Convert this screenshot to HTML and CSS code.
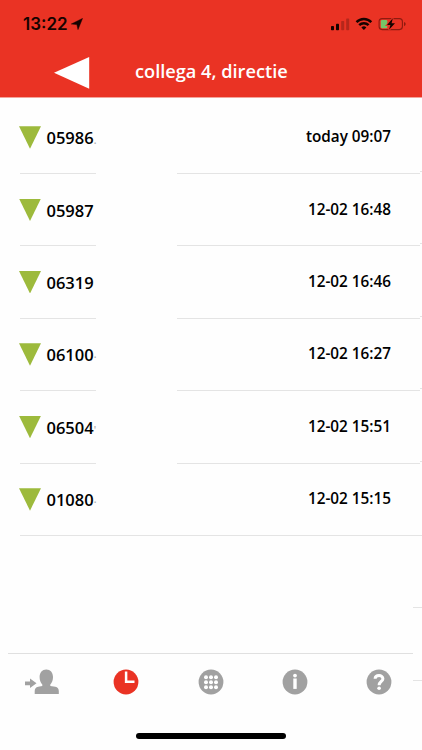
FILE: index.html
```html
<!DOCTYPE html>
<html lang="nl">
<head>
    <meta charset="UTF-8">
    <meta name="viewport" content="width=device-width, initial-scale=1.0">
    <title>collega 4, directie</title>
    <link rel="stylesheet" href="styles.css">
</head>
<body>
    <header class="header">
        <div class="status">
            <span class="clock">13:22</span>
            <svg class="location" width="12" height="12" viewBox="0 0 12 12"><path d="M11.5 .4 7 11.6 5.900 6.600 .3 6Z" stroke="#160300" stroke-width=".5"/></svg>
            <svg class="system" width="76" height="14" viewBox="0 0 76 14">
                <rect x="1" y="9" width="3" height="4.2" rx=".7"/>
                <rect x="6" y="6.7" width="3" height="6.5" rx=".7"/>
                <rect x="11.2" y="4" width="3" height="9.2" rx=".7" opacity=".25"/>
                <rect x="16.2" y="1.4" width="3" height="11.8" rx=".7" opacity=".25"/>
                <g fill="none" stroke="#160300" stroke-width="2.4">
                    <path d="M26.5 5.1a10.3 10.3 0 0 1 14.8 0M29.2 8.2a6.6 6.6 0 0 1 9.4 0"/>
                </g>
                <path d="M31.4 10.4a3.7 3.7 0 0 1 5 0L33.9 13Z"/>
                <rect x="49.1" y="1.6" width="23.3" height="11" rx="3" fill="none" stroke="#8d1b10" stroke-width="1.1"/>
                <path d="M74 5v4.2q1.7-.5 1.7-2.1T74 5" fill="#8d1b10"/>
                <rect x="50.8" y="3" width="6.5" height="8.3" rx="1.3" fill="#76c467"/>
                <path d="M62.8 1.2 57 8h3.4l-1.4 4.8 6-6.6h-3.4Z" stroke="#ea3324" stroke-width="1.8" paint-order="stroke"/>
            </svg>
        </div>
        <div class="title-bar">
            <svg class="back" width="36" height="32" viewBox="0 0 36 32"><path d="M0 15.8 35.2 0v31.7Z"/></svg>
            <h1>collega 4, directie</h1>
        </div>
    </header>

    <main class="calls">
        <div class="call">
            <span class="arrow"></span>
            <span class="number">05986<i>.</i></span>
            <span class="time">today 09:07</span>
        </div>
        <div class="call">
            <span class="arrow"></span>
            <span class="number">05987</span>
            <span class="time">12-02 16:48</span>
        </div>
        <div class="call">
            <span class="arrow"></span>
            <span class="number">06319</span>
            <span class="time">12-02 16:46</span>
        </div>
        <div class="call">
            <span class="arrow"></span>
            <span class="number">06100<i>·</i></span>
            <span class="time">12-02 16:27</span>
        </div>
        <div class="call">
            <span class="arrow"></span>
            <span class="number">06504<i>'</i></span>
            <span class="time">12-02 15:51</span>
        </div>
        <div class="call last">
            <span class="arrow"></span>
            <span class="number">01080<i>·</i></span>
            <span class="time">12-02 15:15</span>
        </div>
        <div class="call empty"></div>
        <div class="call empty"></div>
    </main>

    <footer class="footer">
        <nav class="tabs">
            <svg class="contact" width="34" height="26" viewBox="0 0 34 26">
                <path d="M0 12.4h5V9.6l6.500 4.700L5 19V16.2H0Z"/>
                <path d="M21.3.5c4.1 0 6.7 3 6.7 7.6 0 3-1 5.600-2.700 7.400v1.600l5 .7c2.400.5 3.500 2 3.500 4.200V25H9.700v-3c0-2.200 1.100-3.700 3.500-4.200l4.100-.7v-1.600c-1.700-1.800-2.700-4.400-2.700-7.400C14.600 3.500 17.200.5 21.300.5Z"/>
            </svg>
            <svg class="active" width="26" height="26" viewBox="0 0 26 26">
                <circle cx="13" cy="13" r="12.4"/>
                <path class="hands" d="M13.1 2.5V12.7H21.5"/>
            </svg>
            <svg width="26" height="26" viewBox="0 0 26 26">
                <circle cx="13" cy="13" r="12.4"/>
                <g class="mark">
                    <circle cx="8" cy="8.2" r="2"/><circle cx="13" cy="8.2" r="2"/><circle cx="18" cy="8.2" r="2"/>
                    <circle cx="8" cy="13.2" r="2"/><circle cx="13" cy="13.2" r="2"/><circle cx="18" cy="13.2" r="2"/>
                    <circle cx="8" cy="18.2" r="2"/><circle cx="13" cy="18.2" r="2"/><circle cx="18" cy="18.2" r="2"/>
                </g>
            </svg>
            <svg width="26" height="26" viewBox="0 0 26 26">
                <circle cx="13" cy="13" r="12.4"/>
                <g class="mark">
                    <circle cx="13" cy="6.6" r="1.9"/>
                    <rect x="11.3" y="9.5" width="3.4" height="10.4"/>
                </g>
            </svg>
            <svg width="26" height="26" viewBox="0 0 26 26">
                <circle cx="13" cy="13" r="12.4"/>
                <path class="line" d="M9.1 9.7C9.3 5.5 16.9 5.5 16.9 9.7 16.9 12.4 13.1 12.7 13.1 16.3"/>
                <circle class="mark" cx="13.1" cy="19.3" r="1.8"/>
            </svg>
        </nav>
        <div class="home-bar"></div>
    </footer>
</body>
</html>
```

FILE: styles.css
```css
* {
    box-sizing: border-box;
}
body {
    margin: 0;
    height: 750px;
    display: flex;
    flex-direction: column;
    overflow: hidden;
    background: #fefefe;
    color: #000;
    font-family: "Open Sans", "Noto Sans", sans-serif;
    font-weight: 600;
}
.header {
    height: 98px;
    flex: none;
    background: #ea3324;
    border-bottom: 1px solid #f3a49b;
}
.status {
    display: flex;
    align-items: center;
    height: 48px;
    padding: 0 16px 0 23px;
    fill: #160300;
}
.clock {
    color: #160300;
    font-family: Inter, sans-serif;
    font-size: 17px;
    line-height: 20px;
}
.location {
    margin-left: 3px;
}
.system {
    margin-left: auto;
}
.title-bar {
    display: flex;
    align-items: center;
    height: 49px;
    padding-left: 54px;
}
.back {
    fill: #fff;
}
h1 {
    margin: 0 0 4px 45px;
    color: #fff;
    font-size: 18.2px;
    font-weight: 600;
    line-height: 24px;
}
.calls {
    height: 555px;
    flex: none;
    padding-top: 3.6px;
}
.call {
    display: flex;
    align-items: flex-start;
    height: 72.4px;
    padding: 24.6px 31px 0 19px;
    /* the separator is broken behind the number */
    background:
        linear-gradient(#e4e4e4, #e4e4e4) 20px 100% / 76px 1px no-repeat,
        linear-gradient(#e4e4e4, #e4e4e4) 177px 100% / 243px 1px no-repeat,
        linear-gradient(#e4e4e4, #e4e4e4) 420px calc(100% - 2px) / 2px 1px no-repeat;
}
.call.last {
    background: linear-gradient(#e4e4e4, #e4e4e4) 20px 100% / 402px 1px no-repeat;
}
.call.empty {
    background: linear-gradient(#e4e4e4, #e4e4e4) 413px 100% / 9px 1px no-repeat;
}
.arrow {
    width: 22px;
    height: 22.5px;
    background: #9dba3c;
    clip-path: polygon(0 0, 100% 0, 50% 100%);
}
.number {
    margin-left: 5.5px;
    white-space: nowrap;
    font-size: 16.5px;
    line-height: 24px;
}
.number i {
    color: #aaa;
    font-size: 10px;
    font-style: normal;
    line-height: 1;
}
.time {
    margin-left: auto;
    font-size: 15.3px;
    line-height: 21px;
}
.footer {
    flex: 1;
}
.tabs {
    display: flex;
    gap: 58.3px;
    margin: 0 9px 0 8px;
    padding: 15px 0 0 17px;
    border-top: 1px solid #e0e0e0;
    fill: #a1a1a1;
}
.tabs svg {
    flex: none;
}
.tabs .contact {
    margin-right: -4px;
}
.tabs .active {
    fill: #ea3324;
}
.mark {
    fill: #fff;
}
.line, .hands {
    fill: none;
    stroke: #fff;
    stroke-width: 3;
}
.hands {
    stroke-width: 2.5;
}
.home-bar {
    width: 150px;
    height: 6px;
    margin: 37.5px auto 0;
    border-radius: 3px;
    background: #000;
}
```
